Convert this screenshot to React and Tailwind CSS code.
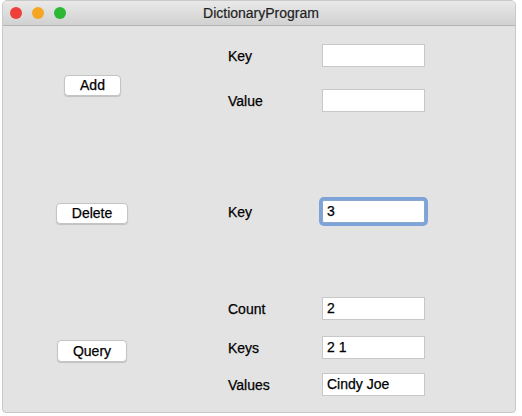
import React from 'react';

const font = { fontFamily: '"Liberation Sans", Arial, sans-serif' };

function Btn({ children, className = '' }) {
  return (
    <div className={`h-[21px] px-[15px] flex items-center justify-center bg-white border border-[#c4c4c4] rounded-[4px] shadow-[0_1px_1px_rgba(0,0,0,0.15)] text-[14px] text-black [-webkit-text-stroke:0.25px_black] ${className}`}>
      {children}
    </div>
  );
}

function Field({ label, value, focused, className = '' }) {
  return (
    <div className={`flex items-center h-[23px] ${className}`}>
      <span className="w-[94px] text-[14px] text-black pt-[1px] [-webkit-text-stroke:0.25px_black]">{label}</span>
      <div
        className={`w-[103px] h-[23px] bg-white px-[4px] text-[14px] leading-[21px] text-black [-webkit-text-stroke:0.25px_black] border ${
          focused
            ? 'border-[#8aa7cf] rounded-[2px] shadow-[0_0_0_3px_#7ea3d8]'
            : 'border-[#c8c8c8]'
        }`}
      >
        {value}
      </div>
    </div>
  );
}

export default function App() {
  return (
    <div className="w-[522px] h-[416px] bg-white" style={font}>
      <div className="ml-[2px] w-[514px] h-[413px] bg-[#e3e3e3] border border-[#c9c9c9] rounded-b-[4px] rounded-t-[5px] overflow-hidden flex flex-col">
        {/* title bar */}
        <div className="relative h-[25px] shrink-0 bg-gradient-to-b from-[#e9e9e9] to-[#d1d1d1] border-b border-[#b3b3b3] flex items-center justify-center">
          <div className="absolute left-[7px] top-[6px] flex gap-[10px]">
            <span className="w-[12px] h-[12px] rounded-full bg-[#ee3f3b]" />
            <span className="w-[12px] h-[12px] rounded-full bg-[#f5a623]" />
            <span className="w-[12px] h-[12px] rounded-full bg-[#2cb735]" />
          </div>
          <span className="text-[14px] text-[#1e1e1e] ml-[4px] [-webkit-text-stroke:0.2px_#1e1e1e]">DictionaryProgram</span>
        </div>

        {/* add section */}
        <div className="flex mt-[18px]">
          <div className="w-[178px] flex items-center justify-center pt-[14px]">
            <Btn className="ml-[1px]">Add</Btn>
          </div>
          <div className="ml-[47px] flex flex-col">
            <Field label="Key" value="" />
            <Field label="Value" value="" className="mt-[22px]" />
          </div>
        </div>

        {/* delete section */}
        <div className="flex mt-[88px]">
          <div className="w-[178px] flex items-center justify-center pt-[3px]">
            <Btn>Delete</Btn>
          </div>
          <div className="ml-[47px] flex flex-col">
            <Field label="Key" value="3" focused />
          </div>
        </div>

        {/* query section */}
        <div className="flex mt-[73px]">
          <div className="w-[178px] flex items-center justify-center pt-[9px]">
            <Btn className="h-[22px]">Query</Btn>
          </div>
          <div className="ml-[47px] flex flex-col">
            <Field label="Count" value="2" />
            <Field label="Keys" value="2 1" className="mt-[16px]" />
            <Field label="Values" value="Cindy Joe" className="mt-[14px]" />
          </div>
        </div>
      </div>
    </div>
  );
}
